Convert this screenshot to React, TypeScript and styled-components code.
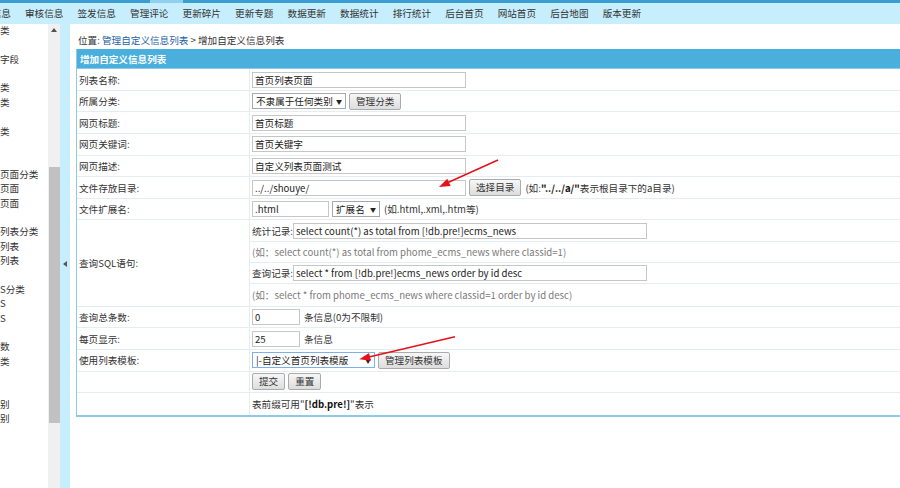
import React from 'react';
import styled, { createGlobalStyle } from 'styled-components';

const GlobalStyle = createGlobalStyle`
  html, body {
    margin: 0;
    padding: 0;
    width: 900px;
    height: 488px;
    overflow: hidden;
    background: #fff;
  }
  body {
    font-family: "Noto Sans CJK SC", "Microsoft YaHei", sans-serif;
    font-size: 9.6px;
    color: #333;
  }
`;

const ROW = 21.6;

const Page = styled.div`
  position: relative;
  width: 900px;
  height: 488px;
  display: flex;
  flex-direction: column;
  overflow: hidden;
`;

const TopStripe = styled.div`
  height: 3px;
  flex-shrink: 0;
  background: linear-gradient(
    to right,
    #3a9ed0 150px,
    #8fd0ef 150px,
    #8fd0ef 183px,
    #3a9ed0 183px
  );
`;

const NavBar = styled.div`
  height: 21px;
  flex-shrink: 0;
  background: #c7eefc;
  overflow: hidden;
`;

const NavList = styled.ul`
  list-style: none;
  margin: 0 0 0 -27.5px;
  padding: 0;
  display: flex;
  gap: 14.15px;
  white-space: nowrap;
`;

const NavItem = styled.li`
  line-height: 21px;
  color: #333;
`;

const Body = styled.div`
  flex: 1;
  display: flex;
  min-height: 0;
`;

const MenuPane = styled.div`
  width: 48px;
  flex-shrink: 0;
  overflow: hidden;
  background: #fff;
`;

const MenuList = styled.ul`
  list-style: none;
  margin: -1.2px 0 0;
  padding: 0;
`;

const MenuLine = styled.li`
  height: 14.4px;
  line-height: 14.4px;
  white-space: nowrap;
  color: #333;
`;

const ScrollTrack = styled.div`
  width: 12px;
  flex-shrink: 0;
  background: #f0f0f0;
  display: flex;
  flex-direction: column;
  align-items: center;
`;

const UpArrow = styled.div`
  margin-top: 4px;
  width: 0;
  height: 0;
  border-left: 3px solid transparent;
  border-right: 3px solid transparent;
  border-bottom: 4px solid #505050;
`;

const Thumb = styled.div`
  margin-top: 135px;
  width: 11px;
  height: 256px;
  background: #c1c1c1;
`;

const Splitter = styled.div`
  width: 10px;
  flex-shrink: 0;
  background: #c7eefc;
  padding-top: 237px;
  box-sizing: border-box;
`;

const LeftArrow = styled.div`
  margin-left: 3px;
  width: 0;
  height: 0;
  border-top: 3px solid transparent;
  border-bottom: 3px solid transparent;
  border-right: 4px solid #555;
`;

const MainFrame = styled.div`
  flex: 1;
  overflow: hidden;
  padding: 8px 0 0 6px;
  background: #fff;
`;

const Crumb = styled.div`
  height: 16px;
  line-height: 16px;
  padding-left: 2px;
  margin-bottom: 1px;
  white-space: nowrap;
  color: #333;
`;

const CrumbLink = styled.a`
  color: #2460a6;
  text-decoration: none;
`;

const Box = styled.div`
  width: 860px;
  border: 1px solid #8ccbe8;
  border-top: none;
  border-width: 0 2px 2px 1px;
  box-sizing: border-box;
`;

const BoxHeader = styled.div`
  height: 20.3px;
  line-height: 20.3px;
  background: #4aafdc;
  color: #fff;
  font-weight: bold;
  padding-left: 3px;
  border-bottom: 1px solid #8ccbe8;
  box-sizing: border-box;
`;

const Row = styled.div<{ $units?: number }>`
  display: grid;
  grid-template-columns: 172px 1fr;
  height: ${(p) => (p.$units ?? 1) * ROW}px;
  border-bottom: 1px solid #e3eef4;
  box-sizing: border-box;
  &:last-child {
    border-bottom: none;
  }
`;

const LabelCell = styled.div`
  display: flex;
  align-items: center;
  padding-left: 2px;
  white-space: nowrap;
`;

const ValueCell = styled.div`
  display: flex;
  align-items: center;
  gap: 3px;
  padding-left: 2px;
  border-left: 1px solid #e3eef4;
  white-space: nowrap;
`;

const StackCell = styled.div`
  display: grid;
  grid-template-rows: repeat(4, 1fr);
  border-left: 1px solid #e3eef4;
`;

const SubRow = styled.div<{ $muted?: boolean }>`
  display: flex;
  align-items: center;
  padding-left: 2px;
  white-space: nowrap;
  color: ${(p) => (p.$muted ? '#7a7a7a' : '#333')};
  border-bottom: 1px solid #e3eef4;
  &:last-child {
    border-bottom: none;
  }
`;

const TextInput = styled.input<{ $w: number }>`
  width: ${(p) => p.$w}px;
  height: 16px;
  box-sizing: border-box;
  border: 1px solid #c6c6c6;
  padding: 0 2px;
  margin: 0;
  font: inherit;
  color: #222;
  background: #fff;
  outline: none;
`;

const SelectBox = styled.div<{ $w: number; $focus?: boolean }>`
  width: ${(p) => p.$w}px;
  height: 16px;
  box-sizing: border-box;
  border: 1px solid ${(p) => (p.$focus ? '#7fb0e6' : '#a8a8a8')};
  padding: 0 3px;
  display: flex;
  align-items: center;
  justify-content: space-between;
  background: #fff;
  color: #222;
`;

const Caret = styled.span`
  font-size: 6px;
  color: #222;
`;

const Button = styled.button`
  height: 17px;
  padding: 0 6px;
  margin: 0;
  border: 1px solid #ababab;
  border-radius: 2px;
  background: linear-gradient(#f7f7f7, #dddddd);
  font: inherit;
  color: #333;
  line-height: 15px;
`;

const Note = styled.span`
  color: #333;
  margin-left: 1px;
`;

const Strong = styled.b`
  color: #111;
`;

const Overlay = styled.svg`
  position: absolute;
  left: 0;
  top: 0;
  pointer-events: none;
`;

const navItems = [
  '管理信息', '审核信息', '签发信息', '管理评论', '更新碎片', '更新专题',
  '数据更新', '数据统计', '排行统计', '后台首页', '网站首页', '后台地图', '版本更新',
];

const menuLines: Record<number, string> = {
  0: '类', 2: '字段', 4: '类', 5: '类', 7: '类',
  10: '页面分类', 11: '页面', 12: '页面',
  14: '列表分类', 15: '列表', 16: '列表',
  18: 'S分类', 19: 'S', 20: 'S',
  22: '数', 23: '类', 26: '别', 27: '别',
};

const App: React.FC = () => {
  return (
    <Page>
      <GlobalStyle />
      <TopStripe />
      <NavBar>
        <NavList>
          {navItems.map((n) => (
            <NavItem key={n}>{n}</NavItem>
          ))}
        </NavList>
      </NavBar>
      <Body>
        <MenuPane>
          <MenuList>
            {Array.from({ length: 32 }, (_, i) => (
              <MenuLine key={i}>{menuLines[i] ?? '\u00a0'}</MenuLine>
            ))}
          </MenuList>
        </MenuPane>
        <ScrollTrack>
          <UpArrow />
          <Thumb />
        </ScrollTrack>
        <Splitter>
          <LeftArrow />
        </Splitter>
        <MainFrame>
          <Crumb>
            位置: <CrumbLink href="#">管理自定义信息列表</CrumbLink> &gt; 增加自定义信息列表
          </Crumb>
          <Box>
            <BoxHeader>增加自定义信息列表</BoxHeader>
            <Row>
              <LabelCell>列表名称:</LabelCell>
              <ValueCell>
                <TextInput $w={214} defaultValue="首页列表页面" />
              </ValueCell>
            </Row>
            <Row>
              <LabelCell>所属分类:</LabelCell>
              <ValueCell>
                <SelectBox $w={94}>
                  不隶属于任何类别 <Caret>▼</Caret>
                </SelectBox>
                <Button>管理分类</Button>
              </ValueCell>
            </Row>
            <Row>
              <LabelCell>网页标题:</LabelCell>
              <ValueCell>
                <TextInput $w={214} defaultValue="首页标题" />
              </ValueCell>
            </Row>
            <Row>
              <LabelCell>网页关键词:</LabelCell>
              <ValueCell>
                <TextInput $w={214} defaultValue="首页关键字" />
              </ValueCell>
            </Row>
            <Row>
              <LabelCell>网页描述:</LabelCell>
              <ValueCell>
                <TextInput $w={214} defaultValue="自定义列表页面测试" />
              </ValueCell>
            </Row>
            <Row>
              <LabelCell>文件存放目录:</LabelCell>
              <ValueCell>
                <TextInput $w={214} defaultValue="../../shouye/" />
                <Button>选择目录</Button>
                <Note>
                  (如:<Strong>"../../a/"</Strong>表示根目录下的a目录)
                </Note>
              </ValueCell>
            </Row>
            <Row>
              <LabelCell>文件扩展名:</LabelCell>
              <ValueCell>
                <TextInput $w={77} defaultValue=".html" />
                <SelectBox $w={48}>
                  扩展名 <Caret>▼</Caret>
                </SelectBox>
                <Note>(如.html,.xml,.htm等)</Note>
              </ValueCell>
            </Row>
            <Row $units={4}>
              <LabelCell>查询SQL语句:</LabelCell>
              <StackCell>
                <SubRow>
                  统计记录:
                  <TextInput $w={354} defaultValue="select count(*) as total from [!db.pre!]ecms_news" />
                </SubRow>
                <SubRow $muted>(如：select count(*) as total from phome_ecms_news where classid=1)</SubRow>
                <SubRow>
                  查询记录:
                  <TextInput $w={354} defaultValue="select * from [!db.pre!]ecms_news order by id desc" />
                </SubRow>
                <SubRow $muted>(如：select * from phome_ecms_news where classid=1 order by id desc)</SubRow>
              </StackCell>
            </Row>
            <Row>
              <LabelCell>查询总条数:</LabelCell>
              <ValueCell>
                <TextInput $w={48} defaultValue="0" />
                <Note>条信息(0为不限制)</Note>
              </ValueCell>
            </Row>
            <Row>
              <LabelCell>每页显示:</LabelCell>
              <ValueCell>
                <TextInput $w={48} defaultValue="25" />
                <Note>条信息</Note>
              </ValueCell>
            </Row>
            <Row>
              <LabelCell>使用列表模板:</LabelCell>
              <ValueCell>
                <SelectBox $w={123} $focus>
                  |-自定义首页列表模版 <Caret>▼</Caret>
                </SelectBox>
                <Button>管理列表模板</Button>
              </ValueCell>
            </Row>
            <Row>
              <LabelCell />
              <ValueCell>
                <Button>提交</Button>
                <Button>重置</Button>
              </ValueCell>
            </Row>
            <Row>
              <LabelCell />
              <ValueCell>
                <span>
                  表前缀可用"<Strong>[!db.pre!]</Strong>"表示
                </span>
              </ValueCell>
            </Row>
          </Box>
        </MainFrame>
      </Body>
      <Overlay width="900" height="488" viewBox="0 0 900 488">
        <line x1="498" y1="160" x2="448" y2="182.5" stroke="#e3121b" strokeWidth="1.5" />
        <polygon points="439,187 450.7,186 447.3,178.8" fill="#e3121b" />
        <line x1="455" y1="336.7" x2="369" y2="357" stroke="#e3121b" strokeWidth="1.5" />
        <polygon points="359.3,359.3 370.9,360.7 369.1,352.9" fill="#e3121b" />
      </Overlay>
    </Page>
  );
};

export default App;
